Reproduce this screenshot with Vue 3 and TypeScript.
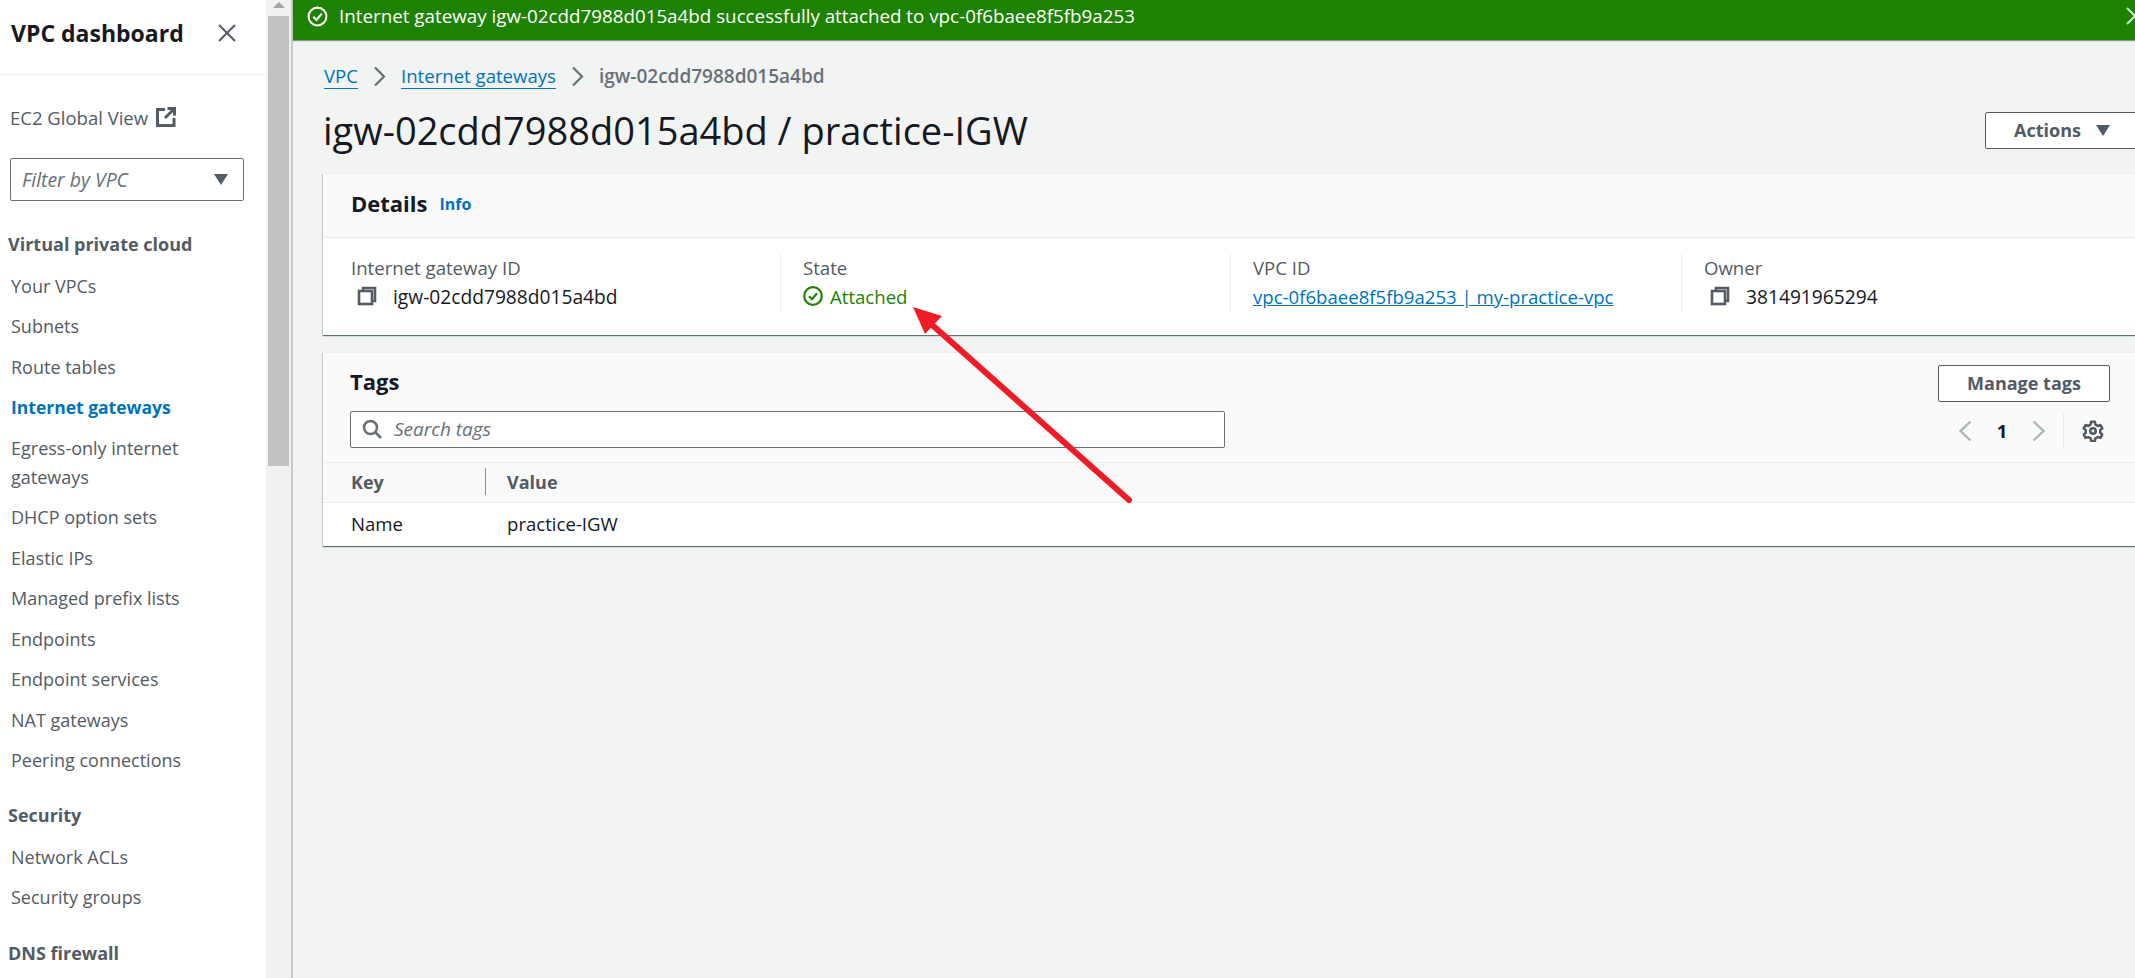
<template>
  <div class="app">
    <aside class="side">
      <div class="side-head">
        <span class="side-title">VPC dashboard</span>
        <svg class="close" width="20" height="20" viewBox="0 0 20 20" fill="none" stroke="#545b64" stroke-width="2"><path d="M2 2l16 16M18 2L2 18" /></svg>
      </div>
      <div class="global">
        <span>EC2 Global View</span>
        <svg width="20" height="20" viewBox="0 0 20 20" fill="none" stroke="#545b64" stroke-width="3"><path d="M9 2.5H1.5v16H18V11M9 11l8-8M11.5 1.5h7v7" /></svg>
      </div>
      <div class="filter">
        <span>Filter by VPC</span>
        <i class="caret"></i>
      </div>
      <template v-for="group in nav" :key="group.title">
        <div class="group-title" :style="{ marginTop: group.gap + 'px' }">{{ group.title }}</div>
        <a v-for="item in group.items" :key="item" class="nav-item" :class="{ active: item === 'Internet gateways' }">{{ item }}</a>
      </template>
    </aside>

    <div class="scrollbar">
      <div class="scroll-up"></div>
      <div class="scroll-thumb"></div>
    </div>

    <main class="main">
      <div class="banner">
        <svg width="21" height="21" viewBox="0 0 20 20" fill="none" stroke="#fff" stroke-width="2"><circle cx="10" cy="10" r="8.5" /><path d="M6 10.2l3 3 5-6" /></svg>
        <span class="banner-text">Internet gateway igw-02cdd7988d015a4bd successfully attached to vpc-0f6baee8f5fb9a253</span>
        <svg class="banner-close" width="18" height="18" viewBox="0 0 18 18" fill="none" stroke="#d5dbdb" stroke-width="2"><path d="M1 1l16 16M17 1L1 17" /></svg>
      </div>

      <div class="content">
        <nav class="crumbs">
          <a class="crumb-link">VPC</a>
          <svg width="13" height="21" viewBox="0 0 13 21" fill="none" stroke="#687078" stroke-width="2.2"><path d="M2 1.5l9 9-9 9" /></svg>
          <a class="crumb-link">Internet gateways</a>
          <svg width="13" height="21" viewBox="0 0 13 21" fill="none" stroke="#687078" stroke-width="2.2"><path d="M2 1.5l9 9-9 9" /></svg>
          <span class="crumb-current">igw-02cdd7988d015a4bd</span>
        </nav>

        <div class="title-row">
          <h1>igw-02cdd7988d015a4bd / practice-IGW</h1>
          <button class="btn actions">Actions <i class="caret"></i></button>
        </div>

        <section class="card details">
          <header class="details-head">
            <h2>Details</h2>
            <a class="info">Info</a>
          </header>
          <div class="details-grid">
            <div class="cell">
              <div class="label">Internet gateway ID</div>
              <div class="value mono">
                <svg class="copy" width="20" height="20" viewBox="0 0 20 20" fill="none" stroke="#545b64" stroke-width="2.6"><path d="M6 5V2h12v13h-3" /><rect x="2" y="5" width="13" height="13" /></svg>
                igw-02cdd7988d015a4bd
              </div>
            </div>
            <div class="cell">
              <div class="label">State</div>
              <div class="value ok">
                <svg width="20" height="20" viewBox="0 0 20 20" fill="none" stroke="#1d8102" stroke-width="2.2"><circle cx="10" cy="10" r="8.8" /><path d="M6 10.2l3 3 5-6" /></svg>
                Attached
              </div>
            </div>
            <div class="cell">
              <div class="label">VPC ID</div>
              <div class="value"><a class="link">vpc-0f6baee8f5fb9a253 | my-practice-vpc</a></div>
            </div>
            <div class="cell">
              <div class="label">Owner</div>
              <div class="value mono">
                <svg class="copy" width="20" height="20" viewBox="0 0 20 20" fill="none" stroke="#545b64" stroke-width="2.6"><path d="M6 5V2h12v13h-3" /><rect x="2" y="5" width="13" height="13" /></svg>
                381491965294
              </div>
            </div>
          </div>
        </section>

        <section class="card tags">
          <div class="tags-head">
            <div class="tags-left">
              <h2>Tags</h2>
              <div class="search">
                <svg width="20" height="20" viewBox="0 0 20 20" fill="none" stroke="#687078" stroke-width="2.6"><circle cx="8.5" cy="8.5" r="6.5" /><path d="M13 13l6 6" /></svg>
                <span>Search tags</span>
              </div>
            </div>
            <div class="tags-right">
              <button class="btn manage">Manage tags</button>
              <div class="pager">
                <svg width="14" height="22" viewBox="0 0 14 22" fill="none" stroke="#aab7b8" stroke-width="2.4"><path d="M12.5 1.5L2.5 11l10 9.5" /></svg>
                <span class="page-no">1</span>
                <svg width="14" height="22" viewBox="0 0 14 22" fill="none" stroke="#aab7b8" stroke-width="2.4"><path d="M1.5 1.5l10 9.5-10 9.5" /></svg>
                <span class="pager-sep"></span>
                <svg class="gear" width="22" height="22" viewBox="0 0 24 24" fill="none" stroke="#545b64" stroke-width="2.8" stroke-linejoin="round"><circle cx="12" cy="12" r="3" /><path d="M10 2h4l.7 3 2.4 1.4 3-.9 2 3.5-2.2 2.1v2.8l2.2 2.1-2 3.5-3-.9-2.4 1.4-.7 3h-4l-.7-3-2.4-1.4-3 .9-2-3.5 2.2-2.1V11.1L1.9 9l2-3.5 3 .9L9.3 5z" /></svg>
              </div>
            </div>
          </div>
          <div class="table-head">
            <span class="col-key">Key</span>
            <span class="col-sep"></span>
            <span>Value</span>
          </div>
          <div class="table-row">
            <span class="col-key">Name</span>
            <span class="col-gap"></span>
            <span>practice-IGW</span>
          </div>
        </section>
      </div>
    </main>

    <!-- red annotation arrow drawn over the screenshot -->
    <svg class="arrow" width="2135" height="978" viewBox="0 0 2135 978">
      <path d="M1129 500L930 323" stroke="#ee1c25" stroke-width="6" stroke-linecap="round" fill="none" />
      <path d="M913 307l29 9-17 18z" fill="#ee1c25" />
    </svg>
  </div>
</template>

<script setup lang="ts">
interface NavGroup {
  title: string
  gap: number
  items: string[]
}

const nav: NavGroup[] = [
  {
    title: 'Virtual private cloud',
    gap: 31,
    items: [
      'Your VPCs',
      'Subnets',
      'Route tables',
      'Internet gateways',
      'Egress-only internet gateways',
      'DHCP option sets',
      'Elastic IPs',
      'Managed prefix lists',
      'Endpoints',
      'Endpoint services',
      'NAT gateways',
      'Peering connections'
    ]
  },
  { title: 'Security', gap: 33, items: ['Network ACLs', 'Security groups'] },
  { title: 'DNS firewall', gap: 34, items: [] }
]
</script>

<style>
html,
body {
  margin: 0;
  overflow: hidden;
}
</style>

<style scoped>
.app {
  display: flex;
  position: relative;
  width: 2135px;
  height: 978px;
  overflow: hidden;
  font-family: 'Open Sans', 'Noto Sans', sans-serif;
  font-size: 18.6px;
  color: #16191f;
  background: #fff;
}

.side {
  width: 266px;
  flex: none;
  overflow: hidden;
  font-size: 18px;
  color: #545b64;
}

.side-head {
  display: flex;
  align-items: center;
  justify-content: space-between;
  height: 75px;
  box-sizing: border-box;
  padding: 0 29px 9px 11px;
  border-bottom: 1px solid #eaeded;
}

.side-title {
  font-size: 23px;
  font-weight: 700;
  color: #16191f;
}

.global {
  display: flex;
  align-items: center;
  gap: 8px;
  height: 24px;
  margin: 30px 0 0 10px;
  font-size: 18.5px;
}

.filter {
  display: flex;
  align-items: center;
  justify-content: space-between;
  box-sizing: border-box;
  width: 234px;
  height: 43px;
  margin: 29px 0 0 10px;
  padding: 0 15px 0 11px;
  border: 1px solid #687078;
  border-radius: 2px;
  font-size: 19.4px;
  font-style: italic;
  color: #687078;
}

.caret {
  display: inline-block;
  width: 0;
  height: 0;
  border-left: 7px solid transparent;
  border-right: 7px solid transparent;
  border-top: 11px solid #545b64;
}

.group-title {
  margin-left: 8px;
  height: 24px;
  line-height: 24px;
  font-weight: 700;
}

.nav-item {
  display: block;
  width: 220px;
  margin: 16.5px 0 -5px 11px;
  line-height: 29px;
}

.group-title + .nav-item {
  margin-top: 15.5px;
}

.nav-item.active {
  font-size: 17.5px;
  font-weight: 700;
  color: #0073bb;
}

.scrollbar {
  width: 25px;
  flex: none;
  background: #f1f1f1;
}

.scroll-up {
  width: 0;
  height: 0;
  margin: 2px auto 8px;
  border-left: 6px solid transparent;
  border-right: 6px solid transparent;
  border-bottom: 6px solid #a3a3a3;
}

.scroll-thumb {
  width: 21px;
  height: 450px;
  margin: 0 auto 0 2px;
  background: #c1c1c1;
}

.main {
  flex: 1;
  min-width: 0;
  border-left: 2px solid #c6cbcb;
  background: #f2f3f3;
}

.banner {
  display: flex;
  align-items: center;
  gap: 11px;
  height: 40px;
  box-sizing: border-box;
  padding: 0 0 8px 14px;
  background: #1d8102;
  color: #fff;
  box-shadow: 0 1px 1px #8a8f8f;
}

.banner-text {
  flex: 1;
  font-size: 18.8px;
}

.banner-close {
  margin: 0 -9px 0 0;
}

.content {
  padding: 0 0 0 30px;
}

.crumbs {
  display: flex;
  align-items: center;
  gap: 15px;
  height: 30px;
  padding: 21px 0 0 1px;
}

.crumb-link {
  color: #0073bb;
  border-bottom: 1px solid #0073bb;
  line-height: 25px;
}

.crumb-current {
  font-size: 19px;
  font-weight: 600;
  color: #687078;
}

.title-row {
  display: flex;
  align-items: center;
  justify-content: space-between;
  box-sizing: border-box;
  height: 81px;
  margin-bottom: 1px;
  padding-bottom: 3px;
}

h1 {
  margin: 0;
  font-size: 38px;
  font-weight: 400;
  color: #16191f;
}

.btn {
  box-sizing: border-box;
  height: 37px;
  padding-bottom: 2px;
  background: #fff;
  border: 1px solid #545b64;
  border-radius: 2px;
  font: inherit;
  font-size: 18px;
  font-weight: 700;
  color: #545b64;
}

.actions {
  display: flex;
  align-items: center;
  gap: 15px;
  width: 170px;
  margin-right: -20px;
  padding: 0 28px;
}

.card {
  background: #fff;
  box-shadow: 0 1px 1px 0 rgba(0, 28, 36, 0.5), 1px 1px 1px 0 rgba(0, 28, 36, 0.1), -1px 1px 1px 0 rgba(0, 28, 36, 0.1);
}

.details {
  height: 162px;
}

.details-head {
  display: flex;
  align-items: center;
  gap: 12px;
  box-sizing: border-box;
  height: 65px;
  padding: 0 0 6px 28px;
  background: #fafafa;
  border-top: 1px solid #eaeded;
  border-bottom: 1px solid #eaeded;
}

h2 {
  margin: 0;
  font-size: 22px;
  font-weight: 700;
  color: #16191f;
}

.info {
  font-size: 16px;
  font-weight: 700;
  color: #0073bb;
  padding-top: 3px;
}

.details-grid {
  display: grid;
  grid-template-columns: 429px 450px 451px 1fr;
  padding: 16px 0 0 28px;
}

.cell {
  height: 59px;
  padding-left: 22px;
  border-left: 1px solid #eaeded;
}

.cell:first-child {
  padding-left: 0;
  border-left: 0;
}

.label {
  line-height: 24px;
  margin-top: 2px;
  color: #545b64;
}

.value {
  display: flex;
  align-items: center;
  gap: 7px;
  height: 30px;
  margin-top: 1px;
}

.value.mono {
  font-size: 19.2px;
}

.value .copy {
  margin: 0 9px 0 6px;
}

.value.ok {
  color: #1d8102;
}

.link {
  color: #0073bb;
  text-decoration: underline;
}

.tags {
  height: 194px;
  margin-top: 17px;
}

.tags-head {
  display: flex;
  justify-content: space-between;
  height: 111px;
  box-sizing: border-box;
  padding: 12px 25px 0 27px;
  background: #fafafa;
  border-top: 1px solid #eaeded;
  border-bottom: 1px solid #eaeded;
}

.tags-left h2 {
  line-height: 32px;
}

.search {
  display: flex;
  align-items: center;
  gap: 12px;
  box-sizing: border-box;
  width: 875px;
  height: 37px;
  margin-top: 14px;
  padding: 0 0 2px 11px;
  background: #fff;
  border: 1px solid #687078;
  border-radius: 2px;
  font-size: 19px;
  font-style: italic;
  color: #687078;
}

.tags-right {
  display: flex;
  flex-direction: column;
  align-items: flex-end;
}

.manage {
  width: 172px;
}

.pager {
  display: flex;
  align-items: center;
  height: 37px;
  margin-top: 10px;
}

.page-no {
  width: 60px;
  text-align: center;
  font-weight: 700;
  color: #16191f;
}

.pager-sep {
  width: 1px;
  height: 37px;
  margin: 0 18px 0 17px;
  background: #eaeded;
}

.gear {
  margin-right: 6px;
}

.table-head,
.table-row {
  display: flex;
  align-items: center;
  padding-left: 28px;
  padding-bottom: 2px;
}

.table-head {
  height: 40px;
  box-sizing: border-box;
  background: #fafafa;
  border-bottom: 1px solid #eaeded;
  font-size: 18px;
  font-weight: 700;
  color: #545b64;
}

.table-row {
  box-sizing: border-box;
  height: 43px;
}

.col-key {
  width: 134px;
}

.col-sep {
  width: 1px;
  height: 27px;
  margin-right: 21px;
  background: #879596;
}

.col-gap {
  width: 22px;
}

.arrow {
  position: absolute;
  left: 0;
  top: 0;
  pointer-events: none;
}
</style>
